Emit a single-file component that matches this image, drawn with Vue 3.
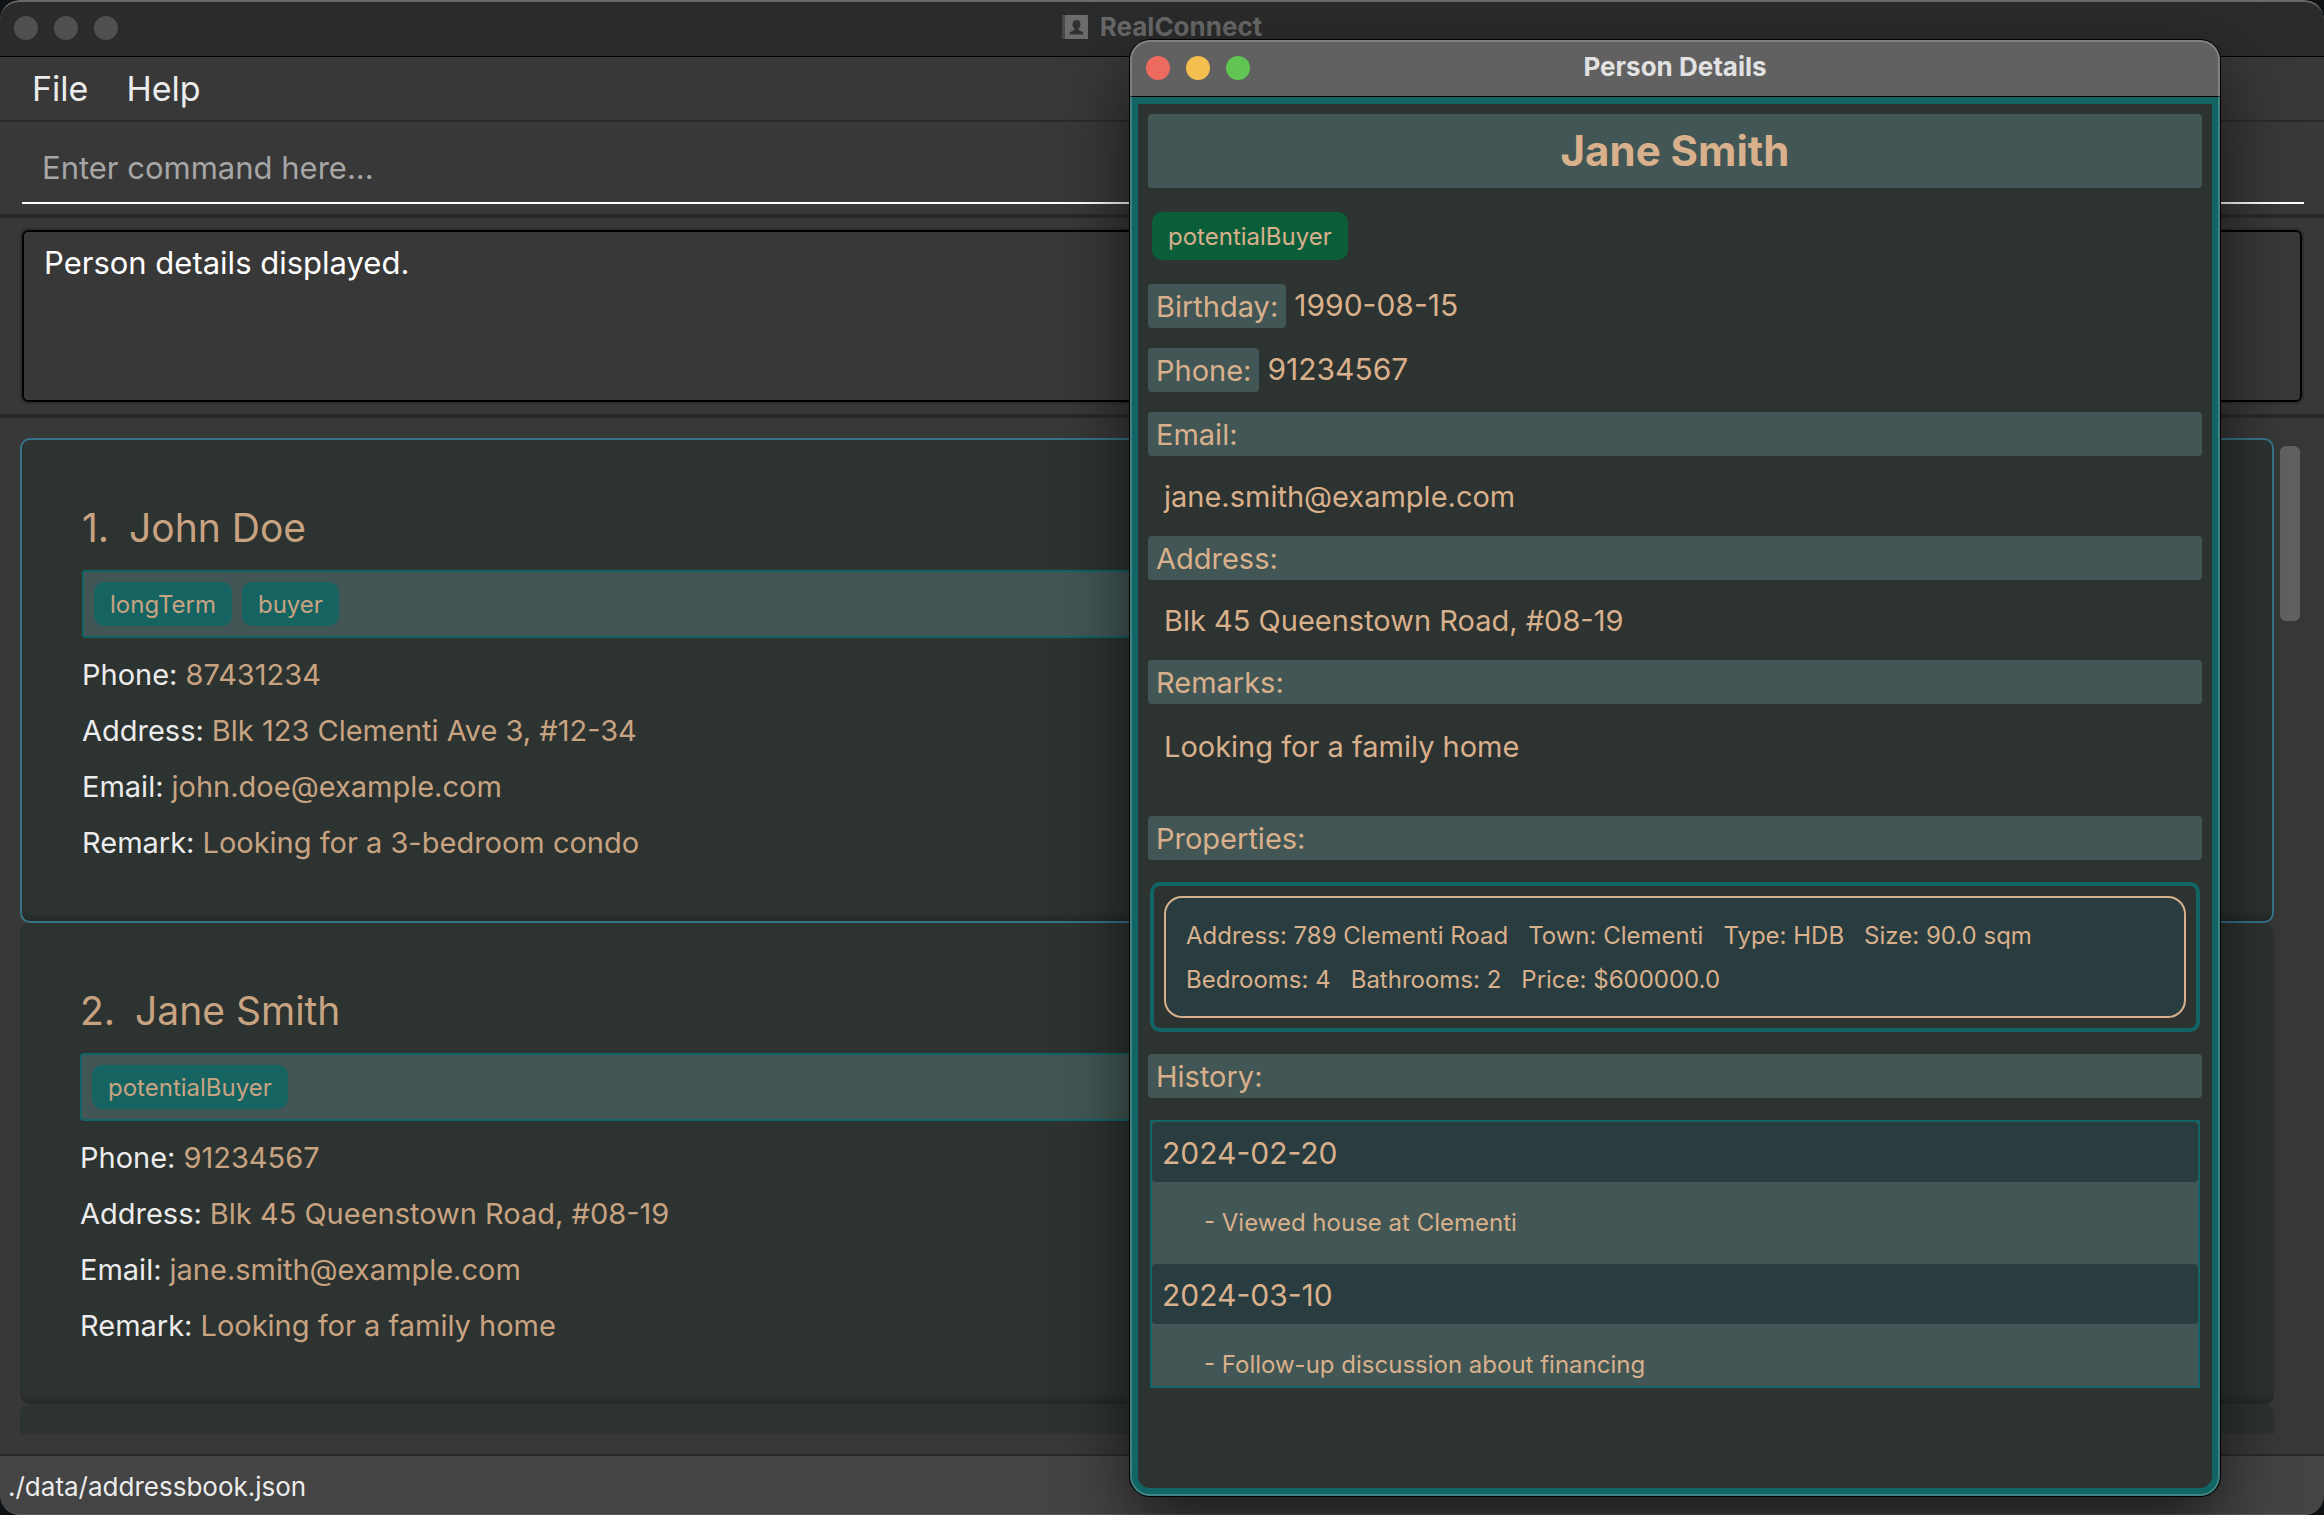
<script setup>
const persons = [
  {
    id: 1,
    name: 'John Doe',
    selected: true,
    tags: ['longTerm', 'buyer'],
    fields: [
      ['Phone:', '87431234'],
      ['Address:', 'Blk 123 Clementi Ave 3, #12-34'],
      ['Email:', 'john.doe@example.com'],
      ['Remark:', 'Looking for a 3-bedroom condo'],
    ],
  },
  {
    id: 2,
    name: 'Jane Smith',
    selected: false,
    tags: ['potentialBuyer'],
    fields: [
      ['Phone:', '91234567'],
      ['Address:', 'Blk 45 Queenstown Road, #08-19'],
      ['Email:', 'jane.smith@example.com'],
      ['Remark:', 'Looking for a family home'],
    ],
  },
]

const inlineFields = [
  ['Birthday:', '1990-08-15'],
  ['Phone:', '91234567'],
]

const blockFields = [
  ['Email:', 'jane.smith@example.com'],
  ['Address:', 'Blk 45 Queenstown Road, #08-19'],
  ['Remarks:', 'Looking for a family home'],
]

const propertyRows = [
  ['Address: 789 Clementi Road', 'Town: Clementi', 'Type: HDB', 'Size: 90.0 sqm'],
  ['Bedrooms: 4', 'Bathrooms: 2', 'Price: $600000.0'],
]

const history = [
  { date: '2024-02-20', note: '- Viewed house at Clementi' },
  { date: '2024-03-10', note: '- Follow-up discussion about financing' },
]
</script>

<template>
  <div class="desktop">
    <main class="window">
      <header class="titlebar">
        <div class="lights">
          <button type="button" aria-label="Close"></button>
          <button type="button" aria-label="Minimize"></button>
          <button type="button" aria-label="Zoom"></button>
        </div>
        <div class="title">
          <svg class="book" viewBox="0 0 26 26" aria-hidden="true">
            <path d="M0 1h3v24H0z" fill="#484848" />
            <path d="M3 1h23v24H3z" fill="#6c6c6c" />
            <path
              d="M14.5 6c2.600 0 4 1.800 4 4.200 0 1.800-.8 3.400-1.800 4.300v1.500c1.400 1 4.800 1.300 4.800 4.500h-14c0-3.200 3.400-3.500 4.800-4.500v-1.500c-1-.9-1.800-2.500-1.800-4.300 0-2.400 1.400-4.200 4-4.200z"
              fill="#323232"
            />
          </svg>
          <span>RealConnect</span>
        </div>
      </header>

      <nav class="menubar">
        <button type="button">File</button>
        <button type="button">Help</button>
      </nav>

      <div class="command">
        <input type="text" aria-label="Command" placeholder="Enter command here..." />
      </div>

      <div class="result">
        <textarea readonly aria-label="Result">Person details displayed.</textarea>
      </div>

      <section class="list-area">
        <ul class="list">
          <li v-for="p in persons" :key="p.id" class="card" :class="{ selected: p.selected }">
            <h2>
              <span>{{ p.id }}.</span>
              <span>{{ p.name }}</span>
            </h2>
            <div class="tagbar">
              <span v-for="t in p.tags" :key="t" class="tag">{{ t }}</span>
            </div>
            <p v-for="[label, value] in p.fields" :key="label" class="field">
              <span class="key">{{ label }}</span>
              <span>{{ value }}</span>
            </p>
          </li>
          <li class="card next"></li>
        </ul>
        <div class="scroll"><div class="thumb"></div></div>
      </section>

      <footer class="status">./data/addressbook.json</footer>
    </main>

    <section class="dialog" role="dialog" aria-labelledby="dialog-title">
      <header class="dialog-bar">
        <div class="lights">
          <button type="button" class="red" aria-label="Close details"></button>
          <button type="button" class="yellow" aria-label="Minimize details"></button>
          <button type="button" class="green" aria-label="Zoom details"></button>
        </div>
        <div id="dialog-title" class="title">Person Details</div>
      </header>
      <div class="details">
        <h1>Jane Smith</h1>
        <span class="tag buyer">potentialBuyer</span>
        <div v-for="[label, value] in inlineFields" :key="label" class="inline">
          <span class="label">{{ label }}</span>
          <span class="number">{{ value }}</span>
        </div>
        <template v-for="[label, value] in blockFields" :key="label">
          <div class="label">{{ label }}</div>
          <div class="value" :class="{ remarks: label === 'Remarks:' }">{{ value }}</div>
        </template>
        <div class="label">Properties:</div>
        <div class="properties">
          <div class="property">
            <div v-for="(row, i) in propertyRows" :key="i" class="property-row">
              <span v-for="cell in row" :key="cell">{{ cell }}</span>
            </div>
          </div>
        </div>
        <div class="label">History:</div>
        <div class="history">
          <template v-for="h in history" :key="h.date">
            <div class="date">{{ h.date }}</div>
            <div class="note">{{ h.note }}</div>
          </template>
        </div>
      </div>
    </section>
  </div>
</template>

<style>
body {
  margin: 0;
  background: #0f1214;
}
</style>

<style scoped>
.desktop {
  position: relative;
  height: 100vh;
  overflow: hidden;
  font-family: Inter, "Liberation Sans", sans-serif;
  font-size: 29px;
  color: #c8a382;
}
.desktop *,
.desktop *::before {
  box-sizing: border-box;
}
button,
input,
textarea {
  font: inherit;
  border: 0;
  padding: 0;
  margin: 0;
  background: none;
}
h1,
h2,
p,
ul {
  margin: 0;
  padding: 0;
  list-style: none;
  font-weight: 400;
}
.window {
  display: flex;
  flex-direction: column;
  height: 100%;
  overflow: hidden;
  border-radius: 20px;
  background: #383838;
}
.titlebar {
  display: grid;
  grid-template-columns: 1fr auto 1fr;
  align-items: center;
  flex: none;
  height: 57px;
  padding: 0 14px 2px;
  border-top: 2px solid #6a6a6a;
  border-bottom: 1px solid #000;
  border-radius: 20px 20px 0 0;
  background: #2b2b2b;
}
.lights {
  display: flex;
  gap: 16px;
}
.lights button {
  width: 24px;
  height: 24px;
  border-radius: 50%;
  background: #505050;
}
.lights .red {
  background: #ed6a5e;
}
.lights .yellow {
  background: #f5bf4f;
}
.lights .green {
  background: #61c554;
}
.title {
  display: flex;
  align-items: center;
  gap: 12px;
  padding-bottom: 2px;
  font: 700 26px/32px Inter, sans-serif;
  color: #686868;
}
.book {
  width: 26px;
  height: 26px;
}
.menubar {
  display: flex;
  flex: none;
  gap: 38px;
  height: 65px;
  padding: 0 32px;
  border-bottom: 2px solid #2b2b2b;
}
.menubar button {
  font-size: 34px;
  color: #ececec;
}
.command {
  flex: none;
  height: 96px;
  padding: 0 20px 0 22px;
  border-bottom: 4px solid #2a2a2a;
}
.command input {
  width: 100%;
  height: 82px;
  padding: 10px 20px 0;
  border-bottom: 2px solid #fff;
  outline: 0;
  font-size: 31px;
  color: #fff;
}
.command input::placeholder {
  color: #a6a6a6;
  opacity: 1;
}
.result {
  flex: none;
  height: 200px;
  padding: 12px 22px;
  border-bottom: 4px solid #2a2a2a;
}
.result textarea {
  display: block;
  width: 100%;
  height: 172px;
  padding: 11px 20px;
  border: 2px solid #000;
  border-radius: 6px;
  outline: 2px solid #2e2e2e;
  resize: none;
  font-size: 31px;
  line-height: 40px;
  color: #fff;
}
.list-area {
  display: flex;
  flex: 1;
  min-height: 0;
  gap: 6px;
  padding: 20px 24px 20px 20px;
}
.list {
  display: flex;
  flex: 1;
  flex-direction: column;
  overflow: hidden;
}
.card {
  flex: none;
  padding: 64px 60px 50px;
  border-radius: 10px;
  background: #2d3331;
  box-shadow: inset 0 -8px 8px -6px rgba(0, 0, 0, 0.3);
}
.card.selected {
  border: 2px solid #35748a;
}
.card.next {
  height: 482px;
}
.card h2 {
  display: flex;
  gap: 20px;
  font-size: 39px;
  line-height: 48px;
}
.tagbar {
  display: flex;
  gap: 10px;
  height: 68px;
  margin: 18px 0 9px;
  padding: 10px;
  border: 2px solid #126566;
  border-radius: 4px;
  background: #425755;
}
.tag {
  padding: 2px 16px 0;
  border-radius: 10px;
  background: #166462;
  font-size: 24px;
  line-height: 42px;
}
.field {
  display: flex;
  gap: 8px;
  line-height: 56px;
}
.key {
  color: #ececec;
}
.scroll {
  width: 20px;
  padding-top: 8px;
}
.thumb {
  height: 175px;
  border-radius: 6px;
  background: #616161;
}
.status {
  flex: none;
  height: 61px;
  padding: 0 8px;
  border-top: 2px solid #2a2a2a;
  border-bottom: 1px solid #5a5a5a;
  border-radius: 0 0 20px 20px;
  background: #444;
  font-size: 26px;
  line-height: 62px;
  color: #ececec;
}

.dialog {
  position: absolute;
  top: 40px;
  right: 104px;
  bottom: 19px;
  width: 1090px;
  display: flex;
  flex-direction: column;
  overflow: hidden;
  border-radius: 20px;
  background: #2d3331;
  color: #d9b08c;
  box-shadow: 0 0 0 1px #000, 0 30px 70px rgba(0, 0, 0, 0.6);
}
.dialog::before {
  content: "";
  position: absolute;
  inset: 0;
  border: 2px solid rgba(255, 255, 255, 0.2);
  border-radius: 20px;
  pointer-events: none;
}
.dialog-bar {
  display: grid;
  grid-template-columns: 1fr auto 1fr;
  align-items: center;
  flex: none;
  height: 57px;
  padding: 0 16px;
  border-bottom: 1px solid #000;
  background: #616161;
}
.dialog-bar .title {
  color: #e2e2e2;
}
.details {
  flex: 1;
  min-height: 0;
  padding: 10px;
  border: 8px solid #116565;
  border-top-width: 7px;
  border-radius: 0 0 20px 20px;
}
.details h1 {
  border-radius: 4px;
  background: #425755;
  font-size: 42px;
  font-weight: 700;
  line-height: 74px;
  text-align: center;
}
.tag.buyer {
  display: block;
  width: fit-content;
  margin: 24px 4px;
  background: #0b5e3a;
  line-height: 46px;
}
.label {
  padding: 2px 8px 0;
  border-radius: 4px;
  background: #425755;
  line-height: 42px;
}
.inline {
  display: flex;
  gap: 8px;
  margin-bottom: 20px;
}
.number {
  font-size: 30px;
  line-height: 42px;
}
.value {
  height: 80px;
  padding: 0 16px;
  line-height: 82px;
}
.value.remarks {
  height: 112px;
  line-height: 86px;
}
.properties {
  margin: 22px 2px;
  padding: 10px;
  border: 4px solid #116565;
  border-radius: 10px;
}
.property {
  height: 122px;
  padding: 16px 20px;
  border: 2px solid #d9b08c;
  border-radius: 18px;
  background: #293d40;
  font-size: 24px;
  line-height: 44px;
}
.property-row {
  display: flex;
  gap: 20px;
}
.history {
  height: 268px;
  margin: 22px 2px 0;
  overflow: hidden;
  border: 2px solid #126566;
  background: #425755;
}
.date {
  padding: 2px 10px 0;
  border-radius: 4px;
  background: #293d40;
  font-size: 30px;
  line-height: 58px;
}
.note {
  height: 82px;
  padding: 0 52px;
  font-size: 24px;
  line-height: 82px;
}
</style>
